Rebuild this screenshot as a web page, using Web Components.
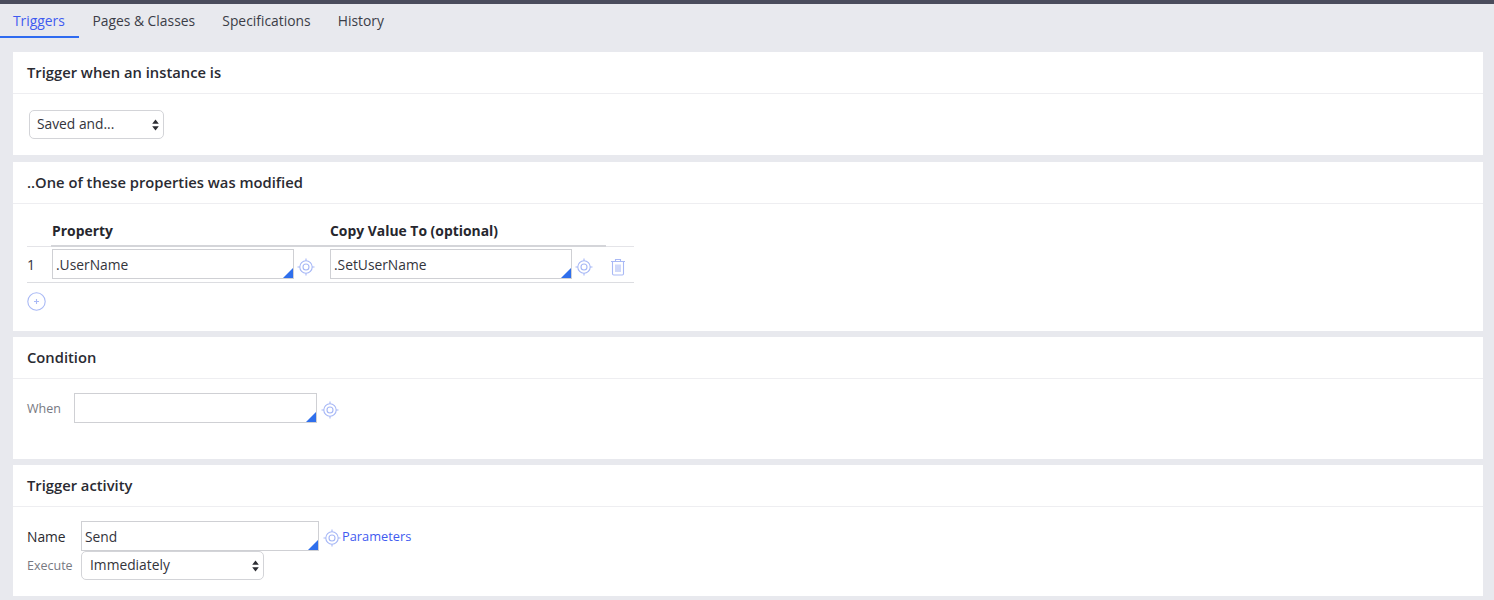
<!DOCTYPE html>
<html>
<head>
<meta charset="utf-8">
<title>Triggers</title>
<style>
  html, body { margin: 0; height: 100%; overflow: hidden; }
  body { background: #e8e9ee; font-family: 'Open Sans', sans-serif; font-size: 14px; color: #2b2b30; border-top: 4px solid #4a4c5c; box-sizing: border-box; }
  .cards { display: flex; flex-direction: column; gap: 6px; padding: 14px 11px 0 13px; }
  .row { display: flex; align-items: center; }
</style>
</head>
<body>
<rule-tabs></rule-tabs>
<div class="cards">
  <rule-card heading="Trigger when an instance is" height="103" style="margin-bottom:1px">
    <rule-select label="Saved and..." width="135" pad="7" style="margin:16px 0 0 16px"></rule-select>
  </rule-card>

  <rule-card heading="..One of these properties was modified" height="169">
    <prop-table></prop-table>
  </rule-card>

  <rule-card heading="Condition" height="122">
    <div class="row" style="margin:14px 0 0 14px">
      <rule-label muted width="47">When</rule-label>
      <rule-input width="243" height="30"></rule-input>
      <target-icon style="margin:4px 0 0 4px"></target-icon>
    </div>
  </rule-card>

  <rule-card heading="Trigger activity" height="131">
    <div class="row" style="margin:14px 0 0 14px">
      <rule-label width="54">Name</rule-label>
      <rule-input width="238" height="30" value="Send"></rule-input>
      <target-icon style="margin:4px 0 0 4px"></target-icon>
      <a-link>Parameters</a-link>
    </div>
    <div class="row" style="margin:0 0 0 14px">
      <rule-label muted width="54">Execute</rule-label>
      <rule-select label="Immediately" width="183" pad="8"></rule-select>
    </div>
  </rule-card>
</div>

<script>
class RuleTabs extends HTMLElement {
  constructor() {
    super();
    this.attachShadow({ mode: 'open' });
    const tabs = ['Triggers', 'Pages & Classes', 'Specifications', 'History'];
    this.shadowRoot.innerHTML = `
      <style>
        :host { display: flex; height: 34px; }
        .tab { box-sizing: border-box; height: 34px; padding: 0 13.6px; line-height: 34px; font-size: 13.85px; color: #3b3d47; white-space: nowrap; }
        .tab.on { color: #3f5bf0; border-bottom: 2px solid #2f6bf0; padding: 0 14px 0 13px; }
      </style>
      ${tabs.map((t, i) => `<div class="tab ${i === 0 ? 'on' : ''}">${t.replace('&', '&amp;')}</div>`).join('')}
    `;
  }
}
customElements.define('rule-tabs', RuleTabs);

class RuleCard extends HTMLElement {
  constructor() {
    super();
    this.attachShadow({ mode: 'open' });
    this.shadowRoot.innerHTML = `
      <style>
        :host { display: block; box-sizing: border-box; background: #fff; height: ${this.getAttribute('height')}px; }
        .head { box-sizing: border-box; height: 42px; padding-left: 14px; line-height: 41px; font-size: 14.75px; font-weight: 600; color: #2a2b32; border-bottom: 1px solid #eeeef1; }
      </style>
      <div class="head">${this.getAttribute('heading')}</div>
      <slot></slot>
    `;
  }
}
customElements.define('rule-card', RuleCard);

class RuleLabel extends HTMLElement {
  constructor() {
    super();
    this.attachShadow({ mode: 'open' });
    const muted = this.hasAttribute('muted');
    this.shadowRoot.innerHTML = `
      <style>
        :host { display: block; flex: none; width: ${this.getAttribute('width')}px; font-size: ${muted ? 12.5 : 13.8}px; color: ${muted ? '#777982' : '#2b2b30'}; }
      </style>
      <slot></slot>
    `;
  }
}
customElements.define('rule-label', RuleLabel);

class RuleInput extends HTMLElement {
  constructor() {
    super();
    this.attachShadow({ mode: 'open' });
    this.shadowRoot.innerHTML = `
      <style>
        :host { display: block; position: relative; flex: none; box-sizing: border-box; width: ${this.getAttribute('width')}px; height: ${this.getAttribute('height')}px; border: 1px solid #cfd0d4; background: #fff; padding-left: 3px; line-height: 30px; font-size: 13.8px; color: #33343b; }
        .corner { position: absolute; right: 0; bottom: 0; width: 0; height: 0; border-style: solid; border-width: 0 0 10px 10px; border-color: transparent transparent #2f6fec transparent; }
      </style>
      ${this.getAttribute('value') || ''}
      <div class="corner"></div>
    `;
  }
}
customElements.define('rule-input', RuleInput);

class RuleSelect extends HTMLElement {
  constructor() {
    super();
    this.attachShadow({ mode: 'open' });
    this.shadowRoot.innerHTML = `
      <style>
        :host { display: flex; align-items: center; justify-content: space-between; flex: none; box-sizing: border-box; width: ${this.getAttribute('width')}px; height: 29px; border: 1px solid #d3d4d8; border-radius: 5px; background: #fff; padding: 0 4px 0 ${this.getAttribute('pad') || 8}px; font-size: 13.8px; color: #33343b; }
        span { margin-bottom: 3px; }
        svg { display: block; }
      </style>
      <span>${this.getAttribute('label')}</span>
      <svg width="7" height="12" viewBox="0 0 7 12"><path d="M3.5 0.5 L6.8 4.8 H0.2 Z M0.2 7.2 H6.8 L3.5 11.5 Z" fill="#2c2d33"/></svg>
    `;
  }
}
customElements.define('rule-select', RuleSelect);

class TargetIcon extends HTMLElement {
  constructor() {
    super();
    this.attachShadow({ mode: 'open' });
    this.shadowRoot.innerHTML = `
      <style>:host { display: block; flex: none; width: 18px; height: 18px; } svg { display: block; }</style>
      <svg width="18" height="18" viewBox="0 0 18 18" fill="none" stroke="#a6b7f6" stroke-width="1.1">
        <circle cx="9" cy="9" r="6.2"/><circle cx="9" cy="9" r="3"/>
        <path d="M9 .5V2.8M9 15.2v2.3M.5 9H2.8M15.2 9h2.3"/>
      </svg>
    `;
  }
}
customElements.define('target-icon', TargetIcon);

class ALink extends HTMLElement {
  constructor() {
    super();
    this.attachShadow({ mode: 'open' });
    this.shadowRoot.innerHTML = `
      <style>:host { display: block; margin: 0 0 0 1px; font-size: 12.8px; color: #3f5bf0; }</style>
      <slot></slot>
    `;
  }
}
customElements.define('a-link', ALink);

class PropTable extends HTMLElement {
  constructor() {
    super();
    this.attachShadow({ mode: 'open' });
    this.shadowRoot.innerHTML = `
      <style>
        :host { display: block; width: 607px; margin-left: 14px; font-size: 13.9px; color: #26272e; }
        .head { box-sizing: border-box; display: grid; grid-template-columns: 25px 278px 275px; height: 43px; padding-top: 17px; line-height: 20px; font-weight: 700; position: relative; border-bottom: 1px solid #e4e4e8; }
        .head::after { content: ''; position: absolute; left: 24px; width: 555px; bottom: -1px; height: 2px; background: #d4d5d9; }
        .body { box-sizing: border-box; display: flex; align-items: center; height: 36px; padding-bottom: 1px; border-bottom: 1px solid #dcdde1; color: #33343b; }
        .num { width: 25px; box-sizing: border-box; font-size: 14px; }
        .trash { display: block; margin: 5px 0 0 17px; }
        .add { display: block; margin-top: 9px; }
      </style>
      <div class="head"><span></span><span>Property</span><span>Copy Value To (optional)</span></div>
      <div class="body">
        <span class="num">1</span>
        <rule-input width="242" height="30" value=".UserName"></rule-input>
        <target-icon style="margin:5px 15px 0 3px"></target-icon>
        <rule-input width="242" height="30" value=".SetUserName"></rule-input>
        <target-icon style="margin:5px 0 0 3px"></target-icon>
        <svg class="trash" width="16" height="18" viewBox="0 0 16 18" fill="none" stroke="#a9b9f5" stroke-width="1.1">
          <path d="M1 3.5h14M5.5 3.5V1.5h5v2M2.5 3.5v12.3c0 .8.5 1.2 1.2 1.2h8.6c.7 0 1.2-.4 1.2-1.2V3.5"/>
          <path d="M6 6.5v7.5M8 6.5v7.5M10 6.5v7.5"/>
        </svg>
      </div>
      <svg class="add" width="19" height="19" viewBox="0 0 19 19" fill="none" stroke="#a9b9f5" stroke-width="1.1">
        <circle cx="9.5" cy="9.5" r="8.7"/><path d="M7 9.5h5M9.5 7v5"/>
      </svg>
    `;
  }
}
customElements.define('prop-table', PropTable);
</script>
</body>
</html>
